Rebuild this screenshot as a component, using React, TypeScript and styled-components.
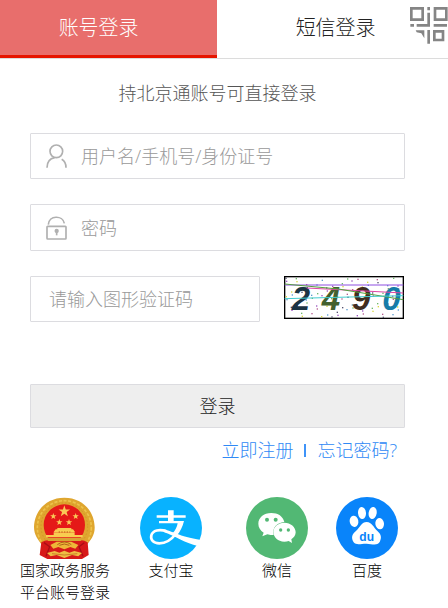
import React, { useState } from 'react';
import styled, { createGlobalStyle } from 'styled-components';

const GlobalStyle = createGlobalStyle`
  *, *::before, *::after { box-sizing: border-box; }
  body {
    margin: 0;
    background: #fff;
    color: #222;
    font-family: "Open Sans", "Noto Sans CJK SC", sans-serif;
    font-weight: 300;
  }
  button, input { font: inherit; color: inherit; }
`;

const Page = styled.main`
  position: relative;
  overflow: hidden;
`;

const Tabs = styled.div`
  display: flex;
  height: 59px;
  border-bottom: 1px solid #dcdcdc;
`;

const Tab = styled.button<{ $active?: boolean }>`
  flex: ${p => (p.$active ? '0 0 48.5%' : '1')};
  border: 0;
  border-bottom: 3px solid ${p => (p.$active ? '#e61400' : 'transparent')};
  padding: ${p => (p.$active ? '0 20px 0 0' : '0 0 0 6px')};
  background: ${p => (p.$active ? '#e86e6c' : '#fff')};
  color: ${p => (p.$active ? '#fff' : '#222')};
  font-size: 20px;
  line-height: 28px;
  cursor: pointer;
`;

const QrButton = styled.button`
  position: absolute;
  top: 6px;
  right: 0;
  padding: 0;
  border: 0;
  background: none;
  cursor: pointer;
  svg { display: block; }
`;

const Form = styled.form`
  display: flex;
  flex-direction: column;
  padding: 0 43px 0 30px;
`;

const Hint = styled.p`
  margin: 20px 0 26px;
  color: #555;
  font-size: 18px;
  line-height: 28px;
  text-align: center;
  white-space: nowrap;
`;

const Field = styled.label<{ $tall?: boolean }>`
  display: flex;
  align-items: center;
  flex: 1;
  min-width: 0;
  height: ${p => (p.$tall ? '47px' : '46px')};
  padding-left: 15px;
  border: 1px solid #dcdce0;
  border-radius: 1px;
  svg { flex: none; }
`;

const FieldRow = styled.div`
  display: flex;
  gap: 24px;
  margin-bottom: 25px;
`;

const CodeRow = styled(FieldRow)`
  padding-right: 1px;
`;

const Input = styled.input<{ $wide?: boolean }>`
  flex: 1;
  min-width: 0;
  border: 0;
  outline: 0;
  padding: 0 0 0 ${p => (p.$wide ? '3px' : '14px')};
  background: transparent;
  font-size: 18px;
  line-height: 28px;
  &::placeholder { color: #999; opacity: 1; }
`;

const CaptchaButton = styled.button`
  flex: none;
  align-self: flex-start;
  padding: 0;
  border: 0;
  background: none;
  cursor: pointer;
  svg { display: block; }
`;

const Submit = styled.button`
  height: 44px;
  margin-top: 37px;
  border: 1px solid #dcdce0;
  border-radius: 1px;
  background: #eee;
  font-size: 18px;
  line-height: 28px;
  cursor: pointer;
`;

const Links = styled.nav`
  display: flex;
  align-items: center;
  justify-content: flex-end;
  gap: 11px;
  margin-top: 8px;
  padding-right: 8px;
  font-size: 18px;
  line-height: 28px;
`;

const Link = styled.a`
  color: #2f89f5;
  text-decoration: none;
`;

const Divider = styled.span`
  width: 2px;
  height: 13px;
  background: #3f93f8;
`;

const Providers = styled.nav`
  display: grid;
  grid-template-columns: 106fr 106fr 106fr 74fr;
  margin-top: 33px;
  padding: 0 44px 4px 12px;
`;

const Provider = styled.a`
  display: flex;
  flex-direction: column;
  align-items: center;
  color: #000;
  font-size: 15px;
  line-height: 22px;
  text-align: center;
  text-decoration: none;
  white-space: pre-line;
  svg { display: block; }
`;

const QrIcon = () => (
  <svg width="38" height="38" viewBox="30 18 114 114" fill="none" stroke="#858585" strokeWidth="8" aria-hidden="true">
    <path d="M34 25H68V59H34ZM105 25H139V59H105ZM103 94H129V120H103Z" />
    <path d="M86 21V31M86 38V76H50M31 76H42M101 76H141M86 90V131" />
    <path d="M47 91H73V115L64 100L50 97Z" fill="#858585" stroke="none" />
  </svg>
);

const UserIcon = () => (
  <svg width="21" height="24" viewBox="77 55 63 72" fill="none" stroke="#b0b0b0" strokeWidth="5" aria-hidden="true">
    <circle cx="108" cy="77" r="19" />
    <path d="M80 126C80 109 88 99 103 96M124 101C133 106 137 114 137 126" />
  </svg>
);

const LockIcon = () => (
  <svg width="21" height="24" viewBox="77 271 63 72" fill="none" stroke="#b0b0b0" strokeWidth="5" aria-hidden="true">
    <rect x="80" y="302" width="57" height="38" rx="2" />
    <path d="M84 297C86 268 127 268 132 293" />
    <path d="M109 317V329" />
    <circle cx="109" cy="316" r="4" fill="#b0b0b0" />
  </svg>
);

const specks = Array.from({ length: 90 }, (_, i) => ({
  x: 31 + ((i * 137) % 350),
  y: 38 + ((i * 61 + Math.floor(i / 5) * 17) % 118),
  c: ['#55536f', '#70b86e', '#b55c90', '#5b9bd0', '#9b54c0', '#d8d840'][i % 6],
}));

const Captcha = () => (
  <svg width="120" height="43" viewBox="27 33 360 129" role="img" aria-label="2490">
    <rect x="29" y="35" width="356" height="125" fill="#fff" stroke="#000" strokeWidth="4" />
    {specks.map((s, i) => <rect key={i} x={s.x} y={s.y} width="4" height="4" fill={s.c} />)}
    <g fontFamily="Liberation Sans" fontWeight="700" fontStyle="italic" fontSize="99">
      <text x="50" y="134" fill="#1c3444">2</text>
      <text x="140" y="134" fill="#43612f">4</text>
      <text x="231" y="134" fill="#402d20">9</text>
      <text x="322" y="134" fill="#167ca8">0</text>
    </g>
    <g fill="none" strokeWidth="3">
      <path d="M29 60H385" stroke="#8e4ee0" />
      <path d="M95 69L385 84" stroke="#df45a5" />
      <path d="M29 57L190 72L385 104" stroke="#549e3e" />
      <path d="M29 101L385 92" stroke="#43cccf" />
    </g>
  </svg>
);

const star = (cx: number, cy: number, r: number) =>
  Array.from({ length: 10 }, (_, i) => {
    const a = (Math.PI * i) / 5 - Math.PI / 2;
    const d = i % 2 ? r * 0.4 : r;
    return `${cx + d * Math.cos(a)},${cy + d * Math.sin(a)}`;
  }).join(' ');

const EmblemIcon = () => (
  <svg width="62" height="62" viewBox="69 37 186 186" aria-hidden="true">
    <path d="M93 181C81 165 69 151 69 127C71 76 108 39 160 39S249 76 251 127C252 151 239 167 227 181Z" fill="#dfa62f" />
    <circle cx="160" cy="129" r="81" fill="none" stroke="#edc34b" strokeWidth="5" strokeDasharray="9 5" />
    <circle cx="160" cy="125" r="70" fill="none" stroke="#cd8b26" strokeWidth="2" strokeDasharray="5 6" />
    <circle cx="160" cy="121" r="62" fill="#e51918" />
    <path d="M91 173C103 167 108 164 118 169H202C212 164 219 167 230 173L233 211L213 223H109L86 211Z" fill="#d71918" />
    <path d="M99 174L116 186L105 215M220 174L204 186L216 215" fill="none" stroke="#a90d15" strokeWidth="4" />
    <path d="M103 160H217L209 169H112Z" fill="#d9a332" />
    <path d="M105 151H215V158H105ZM128 143H191V152H128ZM134 134H186L192 142H128ZM139 130H181V135H139Z" fill="#f8cc50" />
    <path d="M143 142H178" stroke="#bb5b13" strokeWidth="3" strokeDasharray="4 4" />
    <path d="M118 181L137 171H181L202 181L193 192L178 187L160 194L142 187L127 192Z" fill="#eeb638" />
    <path d="M139 180Q160 164 181 180M145 182Q160 174 175 182" fill="none" stroke="#ae6517" strokeWidth="3" />
    <path d="M108 205L131 199L145 204L160 198L175 204L190 199L213 205L202 215L183 211L160 220L137 211L119 215Z" fill="#efbd43" />
    <path d="M123 207L160 211L199 207" fill="none" stroke="#b85f18" strokeWidth="2" />
    <g fill="#fac957">
      <polygon points={star(160, 80, 18)} />
      <polygon points={star(127, 95, 10)} />
      <polygon points={star(194, 95, 10)} />
      <polygon points={star(145, 113, 10)} />
      <polygon points={star(174, 113, 10)} />
    </g>
  </svg>
);

const AlipayIcon = () => (
  <svg width="62" height="62" viewBox="30 36 186 186" aria-hidden="true">
    <circle cx="123" cy="129" r="93" fill="#08b2ff" />
    <path d="M114 76H131V91H167V98H131V108H162C158 126 150 140 141 151L128 145C136 136 141 126 143 115H87V108H114V98H80V91H114Z" fill="#fff" />
    <path d="M137 147C125 163 107 175 88 175C69 175 61 164 64 151C68 136 89 131 109 139" fill="none" stroke="#fff" strokeWidth="8" />
    <path d="M101 133C124 137 146 155 213 165L206 184C161 173 135 153 103 142Z" fill="#fff" />
  </svg>
);

const WechatIcon = () => (
  <svg width="62" height="62" viewBox="33 36 186 186" aria-hidden="true">
    <circle cx="126" cy="129" r="93" fill="#52b874" />
    <path d="M109 84C86 84 70 98 70 116C70 127 76 136 86 143L82 154L97 148C105 151 111 150 116 150C110 130 126 112 148 111C144 94 129 84 109 84Z" fill="#fff" />
    <path d="M148 113C129 113 115 126 115 141S129 170 148 170C153 170 157 169 161 168L171 174L169 163C177 158 182 150 182 142C182 126 167 113 148 113Z" fill="#fff" />
    <g fill="#52b874">
      <circle cx="96" cy="104" r="6" /><circle cx="122" cy="104" r="6" />
      <circle cx="137" cy="135" r="5" /><circle cx="160" cy="135" r="5" />
    </g>
  </svg>
);

const BaiduIcon = () => (
  <svg width="62" height="62" viewBox="33 36 186 186" aria-hidden="true">
    <circle cx="126" cy="129" r="93" fill="#0984fa" />
    <g fill="#fff">
      <ellipse cx="87" cy="109" rx="13" ry="17" transform="rotate(-10 87 109)" />
      <ellipse cx="111" cy="84" rx="12" ry="18" transform="rotate(-5 111 84)" />
      <ellipse cx="143" cy="84" rx="12" ry="18" transform="rotate(10 143 84)" />
      <ellipse cx="164" cy="116" rx="13" ry="17" transform="rotate(-8 164 116)" />
      <path d="M125 111C110 111 106 126 92 139C80 148 78 160 86 172C95 183 111 175 125 176C140 176 155 184 164 171C171 158 168 148 158 139C145 127 141 111 125 111Z" />
    </g>
    <text x="125" y="167" textAnchor="middle" fill="#0984fa" fontFamily="Liberation Sans" fontWeight="700" fontSize="36">du</text>
  </svg>
);

const providers = [
  { label: '国家政务服务\n平台账号登录', icon: <EmblemIcon /> },
  { label: '支付宝', icon: <AlipayIcon /> },
  { label: '微信', icon: <WechatIcon /> },
  { label: '百度', icon: <BaiduIcon /> },
];

export default function App() {
  const [user, setUser] = useState('');
  const [password, setPassword] = useState('');
  const [code, setCode] = useState('');

  return (
    <Page>
      <GlobalStyle />
      <Tabs role="tablist">
        <Tab $active role="tab" aria-selected="true">账号登录</Tab>
        <Tab role="tab" aria-selected="false">短信登录</Tab>
      </Tabs>
      <QrButton type="button" aria-label="二维码登录"><QrIcon /></QrButton>
      <Form onSubmit={e => e.preventDefault()}>
        <Hint>持北京通账号可直接登录</Hint>
        <FieldRow>
          <Field>
            <UserIcon />
            <Input aria-label="用户名" placeholder="用户名/手机号/身份证号" value={user} onChange={e => setUser(e.target.value)} />
          </Field>
        </FieldRow>
        <FieldRow>
          <Field $tall>
            <LockIcon />
            <Input type="password" aria-label="密码" placeholder="密码" value={password} onChange={e => setPassword(e.target.value)} />
          </Field>
        </FieldRow>
        <CodeRow>
          <Field>
            <Input $wide aria-label="图形验证码" placeholder="请输入图形验证码" value={code} onChange={e => setCode(e.target.value)} />
          </Field>
          <CaptchaButton type="button" aria-label="刷新验证码"><Captcha /></CaptchaButton>
        </CodeRow>
        <Submit type="submit">登录</Submit>
        <Links>
          <Link href="#register">立即注册</Link>
          <Divider />
          <Link href="#forgot">忘记密码?</Link>
        </Links>
      </Form>
      <Providers>
        {providers.map(p => (
          <Provider key={p.label} href="#login">
            {p.icon}
            <span>{p.label}</span>
          </Provider>
        ))}
      </Providers>
    </Page>
  );
}
